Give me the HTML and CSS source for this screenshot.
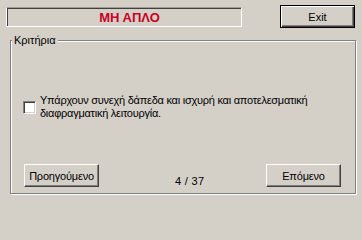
FILE: index.html
```html
<!DOCTYPE html>
<html lang="el">
<head>
<meta charset="utf-8">
<title>Κριτήρια</title>
<link rel="stylesheet" href="styles.css">
</head>
<body>
<div class="window">
  <div class="top">
    <div class="status"><span class="status-text">ΜΗ ΑΠΛΟ</span></div>
    <button class="btn exit">Exit</button>
  </div>
  <div class="group">
    <span class="legend">Κριτήρια</span>
    <div class="crit">
      <span class="check"></span>
      <span class="crit-text">Υπάρχουν συνεχή δάπεδα και ισχυρή και αποτελεσματική διαφραγματική λειτουργία.</span>
    </div>
    <div class="nav">
      <button class="btn nav-btn">Προηγούμενο</button>
      <span class="counter">4 / 37</span>
      <button class="btn nav-btn">Επόμενο</button>
    </div>
  </div>
</div>
</body>
</html>
```

FILE: styles.css
```css
html {
  height: 200px;
  overflow: hidden;
}
html, body {
  margin: 0;
  padding: 0;
  background: #d4d0c8;
}
body {
  width: 362px;
  height: 200px;
  overflow: hidden;
  font-family: "Liberation Sans", Arial, sans-serif;
  font-size: 11px;
  color: #000;
}
.window {
  display: flex;
  flex-direction: column;
}
.top {
  display: flex;
  align-items: flex-start;
  padding: 5px 7px 0 6px;
  height: 23px;
}
.status {
  box-sizing: border-box;
  margin-top: 2px;
  width: 236px;
  height: 20px;
  border: 1px solid;
  border-color: #a09c94 #ffffff #ffffff #ffffff;
  box-shadow: inset 1px 1px #404040, inset -1px -1px #d4d0c8;
  display: flex;
  align-items: center;
  justify-content: center;
}
.status-text {
  color: #c8001e;
  font-weight: bold;
  font-size: 13px;
  padding-left: 11px;
  margin-top: 1px;
}
.btn {
  box-sizing: border-box;
  font-family: "Liberation Sans", Arial, sans-serif;
  font-size: 11px;
  color: #000;
  background: #d4d0c8;
  padding: 0;
  margin: 0;
  border: 1px solid;
  border-color: #ffffff #404040 #404040 #ffffff;
  box-shadow: inset -1px -1px #808080;
  width: 75px;
  height: 23px;
}
.exit {
  margin-left: auto;
  border: 1px solid #000;
  box-shadow: inset 1px 1px #ffffff, inset -1px -1px #404040, inset -2px -2px #808080;
}
.group {
  position: relative;
  box-sizing: border-box;
  margin: 12px 0 0 10px;
  width: 346px;
  height: 154px;
  border: 1px solid #808080;
  box-shadow: inset 1px 1px #ffffff, 1px 1px #ffffff;
  display: flex;
  flex-direction: column;
}
.legend {
  position: absolute;
  top: -7px;
  left: 1px;
  padding: 0 2px;
  background: #d4d0c8;
  line-height: 13px;
}
.crit {
  display: flex;
  align-items: center;
  margin-top: 53px;
  padding-left: 12px;
  padding-right: 10px;
}
.check {
  flex: none;
  box-sizing: border-box;
  width: 13px;
  height: 13px;
  background: #ffffff;
  border: 1px solid;
  border-color: #808080 #ffffff #ffffff #808080;
  box-shadow: inset 1px 1px #404040, inset -1px -1px #d4d0c8;
  margin-right: 4px;
}
.crit-text {
  line-height: 13px;
  letter-spacing: -0.25px;
}
.nav {
  display: flex;
  align-items: flex-start;
  margin-top: auto;
  margin-bottom: 6px;
  padding-left: 13px;
  padding-right: 14px;
}
.nav-btn {
  letter-spacing: -0.2px;
}
.counter {
  flex: 1;
  padding-left: 76px;
  padding-top: 11px;
  font-size: 11px;
  letter-spacing: 0.3px;
}
```
